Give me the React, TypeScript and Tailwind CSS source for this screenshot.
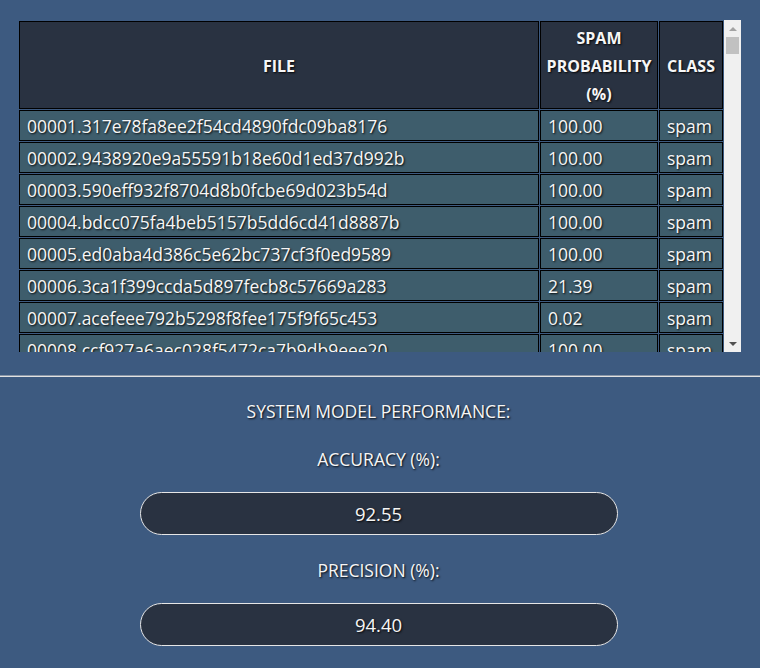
const rows = [
  { file: "00001.317e78fa8ee2f54cd4890fdc09ba8176", prob: "100.00", cls: "spam" },
  { file: "00002.9438920e9a55591b18e60d1ed37d992b", prob: "100.00", cls: "spam" },
  { file: "00003.590eff932f8704d8b0fcbe69d023b54d", prob: "100.00", cls: "spam" },
  { file: "00004.bdcc075fa4beb5157b5dd6cd41d8887b", prob: "100.00", cls: "spam" },
  { file: "00005.ed0aba4d386c5e62bc737cf3f0ed9589", prob: "100.00", cls: "spam" },
  { file: "00006.3ca1f399ccda5d897fecb8c57669a283", prob: "21.39", cls: "spam" },
  { file: "00007.acefeee792b5298f8fee175f9f65c453", prob: "0.02", cls: "spam" },
  { file: "00008.ccf927a6aec028f5472ca7b9db9eee20", prob: "100.00", cls: "spam" },
  { file: "00009.513d6d4a2c4a3e9e43f4d2a8c5b1c0f4", prob: "99.87", cls: "spam" },
  { file: "00010.7f5fb525755c45eb78efc18d7c9ea5aa", prob: "100.00", cls: "spam" },
  { file: "00011.bd8e5bee0a6e2c1b8f8a1cbd4b6e39d4", prob: "96.12", cls: "spam" },
  { file: "00012.381e4f512915109ba1e0853a7a8407b0", prob: "100.00", cls: "spam" },
];

const shadow = "[text-shadow:1px_1px_2px_rgba(0,0,0,0.9)]";

export default function App() {
  return (
    <div className="w-[760px] h-[668px] overflow-hidden bg-[#3d5a80] text-[#f6f6f6] font-['Open_Sans',sans-serif] text-[17.5px]">
      {/* results table + scrollbar */}
      <div className="pt-[20px] pl-[18px] flex">
        <div className="w-[706px] h-[332px] overflow-y-auto [scrollbar-width:none]">
          <table className="table-fixed w-[706px] border-separate border-spacing-[1px]">
            <thead>
              <tr>
                <th className={`w-[520px] h-[87px] bg-[#293241] border border-black text-[16px] font-bold leading-[28px] pt-[2px] ${shadow}`}>FILE</th>
                <th className={`w-[118px] h-[87px] bg-[#293241] border border-black text-[16px] font-bold leading-[28px] pt-[2px] px-1 ${shadow}`}>
                  SPAM PROBABILITY (%)
                </th>
                <th className={`w-[64px] h-[87px] bg-[#293241] border border-black text-[16px] font-bold leading-[28px] pt-[2px] ${shadow}`}>CLASS</th>
              </tr>
            </thead>
            <tbody>
              {rows.map((r) => (
                <tr key={r.file}>
                  <td className={`h-[31px] bg-[#3e5d6c] border border-black pl-[7px] pt-[1px] leading-[27px] whitespace-nowrap overflow-hidden ${shadow}`}>{r.file}</td>
                  <td className={`h-[31px] bg-[#3e5d6c] border border-black pl-[7px] pt-[1px] leading-[27px] ${shadow}`}>{r.prob}</td>
                  <td className={`h-[31px] bg-[#3e5d6c] border border-black pl-[7px] pt-[1px] leading-[27px] ${shadow}`}>{r.cls}</td>
                </tr>
              ))}
            </tbody>
          </table>
        </div>
        {/* scrollbar */}
        <div className="w-[17px] h-[332px] bg-[#f0f0f0] flex flex-col items-center">
          <div className="h-[17px] flex items-center justify-center">
            <div className="w-0 h-0 border-x-[4px] border-x-transparent border-b-[4px] border-b-[#a3a3a3]" />
          </div>
          <div className="w-[13px] h-[17px] bg-[#c1c1c1]" />
          <div className="flex-1" />
          <div className="h-[17px] flex items-center justify-center">
            <div className="w-0 h-0 border-x-[4px] border-x-transparent border-t-[4px] border-t-[#505050]" />
          </div>
        </div>
      </div>

      <div className="mt-[23px] h-[2px] border-t border-[#8a97a8] bg-[#e2e2e2]" />

      {/* performance */}
      <div className="w-[757px] flex flex-col items-center pt-[22px]">
        <p className={`leading-[24px] ${shadow}`}>SYSTEM MODEL PERFORMANCE:</p>
        <p className={`mt-[24px] leading-[24px] ${shadow}`}>ACCURACY (%):</p>
        <div className={`mt-[21px] w-[478px] h-[43px] rounded-full border border-[#e6e6e6] bg-[#293241] flex items-center justify-center text-[18.5px] ${shadow}`}>
          92.55
        </div>
        <p className={`mt-[23px] leading-[24px] ${shadow}`}>PRECISION (%):</p>
        <div className={`mt-[21px] w-[478px] h-[43px] rounded-full border border-[#e6e6e6] bg-[#293241] flex items-center justify-center text-[18.5px] ${shadow}`}>
          94.40
        </div>
      </div>
    </div>
  );
}
